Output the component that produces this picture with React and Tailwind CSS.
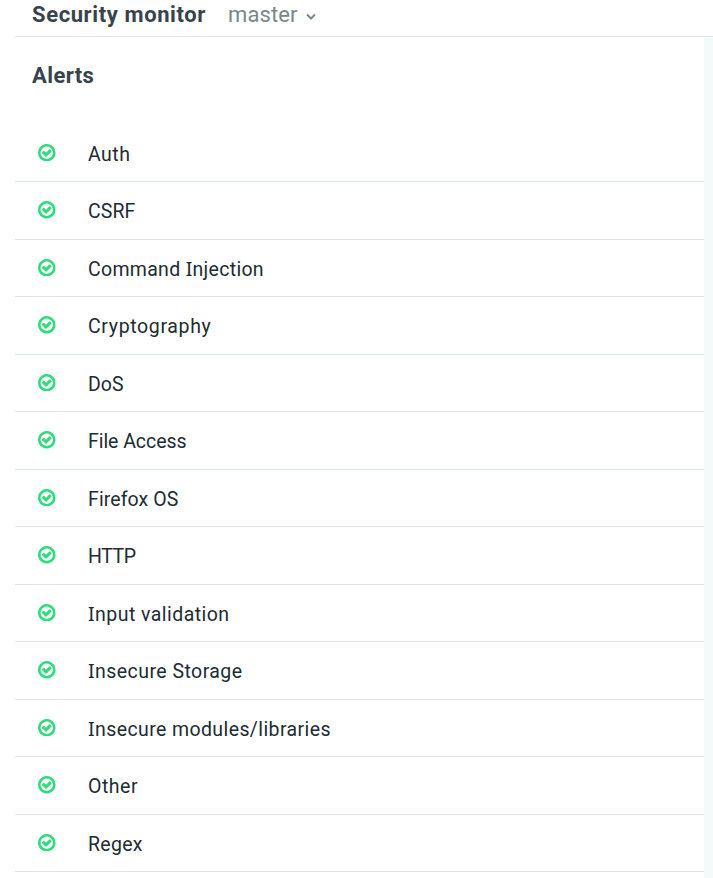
const alerts = [
  { name: "Auth", tracking: "tracking-[0.5px]" },
  { name: "CSRF", tracking: "tracking-[0.1px]" },
  { name: "Command Injection", tracking: "tracking-[0.3px]" },
  { name: "Cryptography", tracking: "tracking-[0.65px]" },
  { name: "DoS", tracking: "tracking-[0px]" },
  { name: "File Access", tracking: "tracking-[-0.05px]" },
  { name: "Firefox OS", tracking: "tracking-[0.1px]" },
  { name: "HTTP", tracking: "tracking-[-0.4px]" },
  { name: "Input validation", tracking: "tracking-[0.45px]" },
  { name: "Insecure Storage", tracking: "tracking-[0.45px]" },
  { name: "Insecure modules/libraries", tracking: "tracking-[0.4px]" },
  { name: "Other", tracking: "tracking-[0.5px]" },
  { name: "Regex", tracking: "tracking-[0.3px]" },
];

function CheckIcon() {
  return (
    <svg viewBox="128 128 1536 1536" className="ml-[23px] mt-[-1px] size-[17.5px] shrink-0 fill-[#2edc7c]" aria-hidden="true">
      <path d="M1299 813l-422 422q-19 19-45 19t-45-19l-294-294q-19-19-19-45t19-45l102-102q19-19 45-19t45 19l147 147 275-275q19-19 45-19t45 19l102 102q19 19 19 45t-19 45zm141 83q0-148-73-273t-198-198-273-73-273 73-198 198-73 273 73 273 198 198 273 73 273-73 198-198 73-273zm224 0q0 209-103 385.5t-279.5 279.5-385.5 103-385.5-103-279.5-279.5-103-385.5 103-385.5 279.5-279.5 385.5-103 385.5 103 279.5 279.5 103 385.5z" />
    </svg>
  );
}

function Label({ text }) {
  return text
    .split(/(I)/)
    .map((part, i) => (part === "I" ? <span key={i} className="font-['Noto_Sans',sans-serif] leading-none">I</span> : part));
}

export default function App() {
  return (
    <div className="flex h-[878px] w-[713px] flex-col overflow-hidden bg-white pl-[15px] font-['Roboto',sans-serif] text-[#212b33]">
      <header className="flex h-[37px] shrink-0 items-start border-b border-[#d9e5eb] pt-px pl-[17px]">
        <h1 className="w-[196px] text-[22px] leading-[28px] font-bold tracking-[0.6px] whitespace-nowrap text-[#37444c]">Security monitor</h1>
        <button className="flex items-start text-[22px] leading-[28px] tracking-[0.1px] text-[#7b868c]">
          master
          <svg viewBox="0 0 10 8" className="ml-[8.5px] mt-[12px] h-2 w-[10px] fill-none stroke-[#7b868c] stroke-2" aria-hidden="true">
            <path d="M1 1.5 5 5.5 9 1.5" />
          </svg>
        </button>
      </header>
      <div className="flex min-h-0 flex-1">
        <main className="w-[689px]">
          <h2 className="h-[87.5px] pt-[25px] pl-[17px] text-[22px] leading-[28px] font-bold tracking-[0.4px] text-[#37444c]">Alerts</h2>
          <ul>
            {alerts.map((alert) => (
              <li key={alert.name} className="flex h-[57.5px] items-center border-b border-[#d9e5eb]">
                <CheckIcon />
                <span className={`mt-[4px] ml-[32.5px] text-[19.5px] leading-[28px] ${alert.tracking}`}>
                  <Label text={alert.name} />
                </span>
              </li>
            ))}
          </ul>
        </main>
        <aside className="flex-1 bg-[#f3fafa]" />
      </div>
    </div>
  );
}
